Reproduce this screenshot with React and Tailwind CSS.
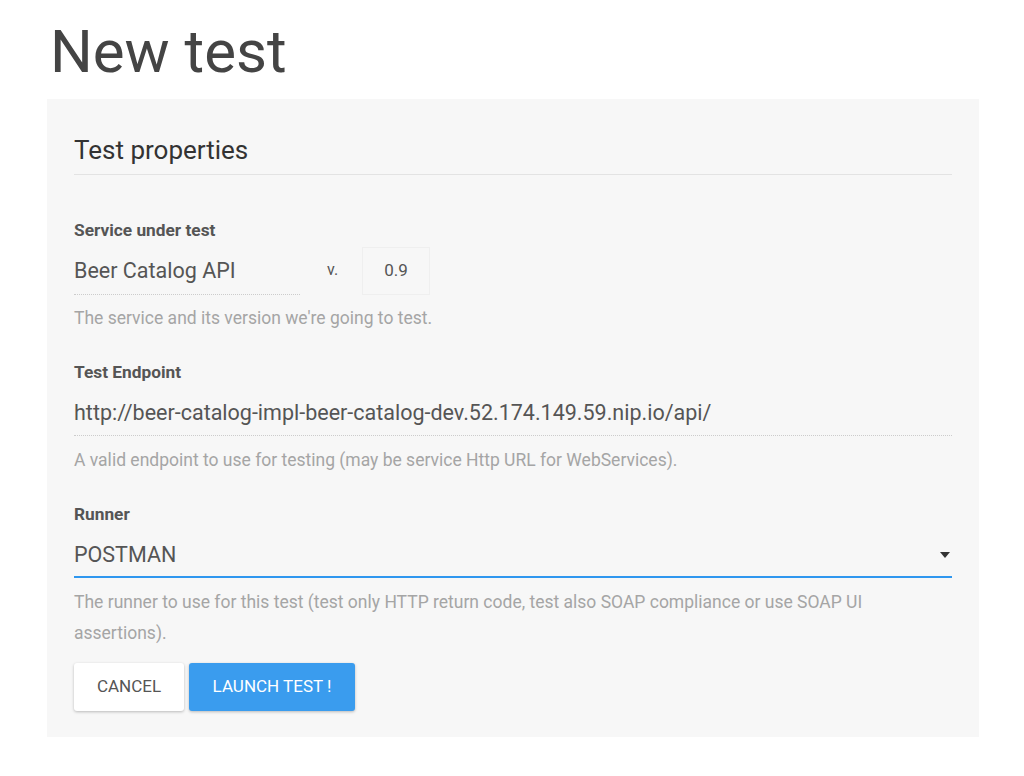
// Formulario "New test" – version estatica para la captura
export default function App() {
  return (
    <div className="min-h-[776px] bg-white font-['Roboto',sans-serif] text-[#555]">
      <div className="pl-[47px] pr-[45px] pt-[16px]">
        <h1 className="pl-[3px] text-[60px] leading-[72px] text-[#444]">New test</h1>

        {/* Panel */}
        <div className="mt-[11px] bg-[#f7f7f7] px-[27px] pt-[34px] pb-[26px]">
          <div className="border-b border-[#e3e3e3] pb-[7px] text-[26px] leading-[34px] text-[#333]">
            Test properties
          </div>

          {/* Servicio */}
          <div className="mt-[44px] text-[17.3px] font-bold leading-[22px] text-[#555]">Service under test</div>
          <div className="mt-[6px] flex items-end">
            <div className="w-[226px] border-b border-dotted border-[#ccc] pb-[7px] text-[21.5px] leading-[32px] text-[#555]">
              Beer Catalog API
            </div>
            <div className="w-[62px] pb-[11px] pl-[27px] text-[16px] leading-[28px] text-[#555]">v.</div>
            <div className="flex h-[48px] w-[68px] items-center justify-center border border-[#efefef] text-[17px] text-[#555]">
              0.9
            </div>
          </div>
          <div className="mt-[12px] text-[17.5px] leading-[22px] text-[#a5a5a5]">
            The service and its version we're going to test.
          </div>

          {/* Endpoint */}
          <div className="mt-[32px] text-[17.3px] font-bold leading-[22px] text-[#555]">Test Endpoint</div>
          <div className="mt-[14px] border-b border-dotted border-[#ccc] pb-[6px] text-[21.5px] leading-[32px] text-[#555]">
            http://beer-catalog-impl-beer-catalog-dev.52.174.149.59.nip.io/api/
          </div>
          <div className="mt-[13px] text-[17.5px] leading-[22px] text-[#a5a5a5]">
            A valid endpoint to use for testing (may be service Http URL for WebServices).
          </div>

          {/* Runner */}
          <div className="mt-[32px] text-[17.3px] font-bold leading-[22px] text-[#555]">Runner</div>
          <div className="mt-[14px] flex items-center justify-between border-b-2 border-[#2f97ef] pb-[5px] pr-[2px]">
            <span className="text-[21.5px] leading-[32px] text-[#555]">POSTMAN</span>
            <svg width="10" height="6" viewBox="0 0 10 6" className="fill-[#333]">
              <path d="M0 0h10L5 6z" />
            </svg>
          </div>
          <div className="mt-[9px] text-[17.5px] leading-[31px] text-[#a5a5a5]">
            The runner to use for this test (test only HTTP return code, test also SOAP compliance or use SOAP UI assertions).
          </div>

          {/* Botones */}
          <div className="mt-[14px] flex gap-[5px]">
            <button className="h-[48px] w-[110px] rounded-[3px] bg-white text-[17px] uppercase text-[#555] shadow-[0_1px_3px_rgba(0,0,0,0.25)]">
              Cancel
            </button>
            <button className="h-[48px] w-[166px] rounded-[3px] bg-[#3a9cee] text-[17px] uppercase text-white shadow-[0_1px_3px_rgba(0,0,0,0.25)]">
              Launch test !
            </button>
          </div>
        </div>
      </div>
    </div>
  );
}
